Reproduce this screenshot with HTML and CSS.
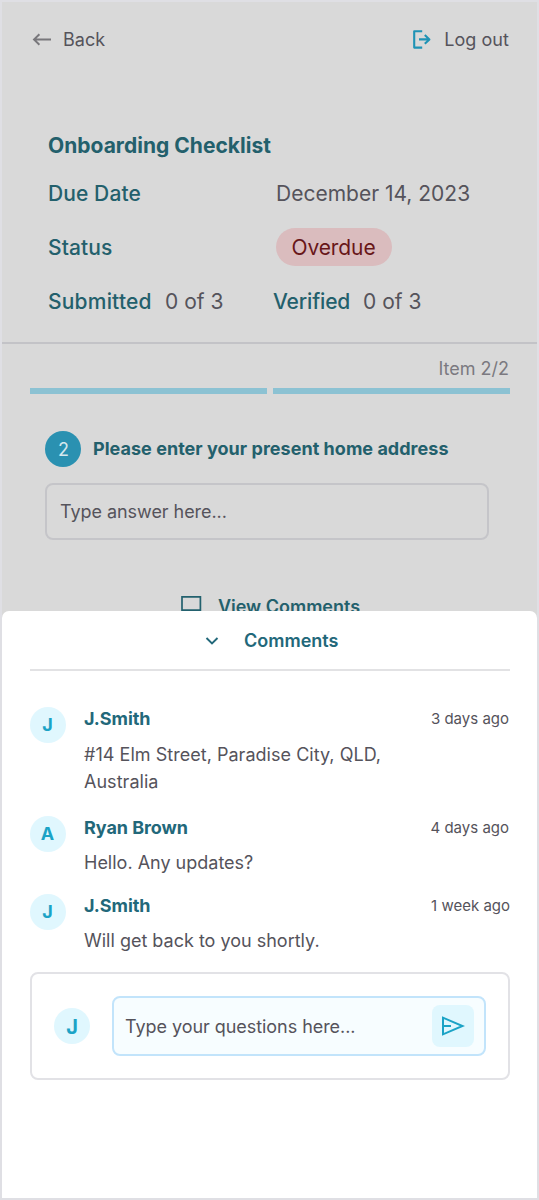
FILE: index.html
```html
<!DOCTYPE html>
<html lang="en">
<head>
<meta charset="utf-8">
<title>Onboarding Checklist</title>
<link rel="stylesheet" href="styles.css">
</head>
<body>
<div class="screen">
  <div class="page">
    <header class="topbar">
      <a class="nav-link back">
        <svg class="back-icon" width="20" height="14" viewBox="0 0 20 14" fill="none" stroke="#78777b" stroke-width="1.9"><path d="M19 6.500H2M7.400 1.200 2 6.500l5.400 5.300"/></svg>
        <span>Back</span>
      </a>
      <a class="nav-link logout">
        <svg width="20" height="20" viewBox="0 0 20 20" fill="none" stroke="#1f93b5" stroke-width="2.1" stroke-linejoin="round"><path d="M10.200 1.300H2.200v16.300h8M7 9.400h10.500M12.800 5 17.400 9.400l-4.600 4.400"/></svg>
        <span>Log out</span>
      </a>
    </header>
    <section class="summary">
      <h1 class="summary-title">Onboarding Checklist</h1>
      <div class="row"><span class="label">Due Date</span><span class="value">December 14, 2023</span></div>
      <div class="row"><span class="label">Status</span><span class="pill">Overdue</span></div>
      <div class="row">
        <span class="label count">Submitted</span><span class="value total">0 of 3</span>
        <span class="label verified">Verified</span><span class="value total">0 of 3</span>
      </div>
    </section>
    <section class="item">
      <div class="item-index">Item 2/2</div>
      <div class="progress"><span class="bar"></span><span class="bar"></span></div>
      <div class="question"><span class="number">2</span><h2 class="question-text">Please enter your present home address</h2></div>
      <div class="answer">Type answer here...</div>
      <div class="view-comments">
        <svg width="22" height="24" viewBox="0 0 22 24" fill="none" stroke="#23616e" stroke-width="1.7"><path d="M2 22V2.800h18.400v13.400H2"/></svg>
        <span>View Comments</span>
      </div>
    </section>
  </div>
  <div class="sheet">
    <div class="sheet-head">
      <svg width="14" height="10" viewBox="0 0 14 10" fill="none" stroke="#22687a" stroke-width="1.9"><path d="m1.500 2 5.500 5.400L12.500 2"/></svg>
      <span>Comments</span>
    </div>
    <div class="comment">
      <span class="avatar">J</span>
      <div class="body">
        <div class="meta"><span class="name">J.Smith</span><span class="time">3 days ago</span></div>
        <p class="text">#14 Elm Street, Paradise City, QLD,<br>Australia</p>
      </div>
    </div>
    <div class="comment next">
      <span class="avatar">A</span>
      <div class="body">
        <div class="meta"><span class="name">Ryan Brown</span><span class="time">4 days ago</span></div>
        <p class="text short">Hello. Any updates?</p>
      </div>
    </div>
    <div class="comment next">
      <span class="avatar">J</span>
      <div class="body">
        <div class="meta"><span class="name">J.Smith</span><span class="time week">1 week ago</span></div>
        <p class="text short">Will get back to you shortly.</p>
      </div>
    </div>
    <div class="composer">
      <span class="avatar large">J</span>
      <div class="field">
        <span class="placeholder">Type your questions here...</span>
        <span class="send">
          <svg width="24" height="22" viewBox="0 0 24 22" fill="none" stroke="#1ba3c6" stroke-width="2"><path d="M2 2.700v16.600L21.500 11ZM2 11h8"/></svg>
        </span>
      </div>
    </div>
  </div>
</div>
</body>
</html>
```

FILE: styles.css
```css
* { box-sizing: border-box; }
body { margin: 0; font-family: Inter, "Liberation Sans", sans-serif; font-size: 18px; color: #55535b; }
h1, h2, p { margin: 0; }
svg { display: block; flex: none; }
.screen { position: relative; width: 539px; height: 1200px; overflow: hidden; border: 2px solid #dfdfe4; background: #d9d9d9; white-space: nowrap; }
.topbar { display: flex; justify-content: space-between; height: 76px; padding: 0 28px 0 30px; }
.nav-link { display: flex; align-items: center; gap: 11px; height: 75px; line-height: 75px; }
.logout { gap: 12px; letter-spacing: .05px; }
.summary { height: 264px; padding: 53px 0 0 46px; font-size: 21px; }
.summary-title { height: 30px; margin-bottom: 5px; font-size: 21px; line-height: 30px; font-weight: 700; letter-spacing: .02px; color: #23606c; }
.row { display: flex; align-items: center; height: 54px; }
.label { width: 228px; color: #23606c; font-weight: 500; letter-spacing: .1px; }
.label.count { width: 117px; letter-spacing: .2px; }
.label.verified { width: 90px; margin-left: -1px; letter-spacing: -0.15px; }
.row .total { width: 109px; }
.pill { height: 38px; width: 116px; border-radius: 19px; line-height: 39px; text-align: center; letter-spacing: -0.1px; padding-right: 1px; background: #dabcbe; color: #681619; }
.item { border-top: 2px solid #c3c3c7; padding: 11px 27px 0 28px; }
.item-index { height: 33px; line-height: 27px; text-align: right; color: #7b7980; padding-right: 1px; }
.progress { display: flex; gap: 6px; }
.bar { width: 237px; height: 6px; background: #8cc2d3; }
.question { display: flex; align-items: center; gap: 12px; margin: 36px 0 0 15px; height: 37px; }
.number { width: 36px; height: 36px; border-radius: 50%; background: #2a91b1; color: #d5e8ee; text-align: center; line-height: 38px; padding-left: 1px; }
.question-text { font-size: 18px; font-weight: 700; letter-spacing: .03px; color: #23606c; }
.answer { width: 444px; height: 57px; margin: 16px 0 0 15px; border: 2px solid #c5c5c9; border-radius: 8px; padding-left: 13px; line-height: 54px; letter-spacing: -0.05px; }
.view-comments { display: flex; align-items: flex-start; justify-content: center; gap: 16px; margin-top: 54px; color: #23606c; font-weight: 600; line-height: 25px; }
.sheet { position: absolute; left: 0; right: 0; top: 609px; bottom: 0; background: #fff; border-radius: 7px 7px 0 0; padding: 0 27px 0 28px; }
.sheet-head { display: flex; align-items: center; height: 60px; padding: 2px 0 0 175px; gap: 25px; border-bottom: 2px solid #e2e2e4; color: #22687a; font-weight: 600; line-height: 58px; }
.comment { display: flex; gap: 18px; padding-top: 36px; height: 145px; }
.comment.next { height: 78px; padding-top: 0; }
.avatar { flex: none; width: 36px; height: 36px; border-radius: 50%; background: #e0f7fe; color: #1ba3c6; font-weight: 700; text-align: center; line-height: 36px; padding-right: 1px; }
.body { flex: 1; }
.meta { display: flex; justify-content: space-between; line-height: 24px; }
.name { color: #22687a; font-weight: 700; letter-spacing: -0.05px; }
.time { font-size: 15px; padding-right: 1px; }
.time.week { padding-right: 0; }
.text { line-height: 27px; margin-top: 10px; letter-spacing: .03px; }
.text.short { margin-top: 9px; letter-spacing: 0; }
.composer { display: flex; align-items: center; gap: 22px; height: 108px; padding: 0 22px; border: 2px solid #e2e2e6; border-radius: 8px; }
.avatar.large { font-size: 20px; line-height: 39px; padding: 0; }
.field { flex: 1; display: flex; align-items: center; justify-content: space-between; height: 60px; padding: 0 10px 0 11px; border: 2px solid #c2e4fb; border-radius: 8px; background: #f7fdff; }
.placeholder { letter-spacing: -0.05px; }
.send { display: flex; align-items: center; justify-content: center; width: 42px; height: 42px; border-radius: 8px; background: #e0f7fe; }
```
